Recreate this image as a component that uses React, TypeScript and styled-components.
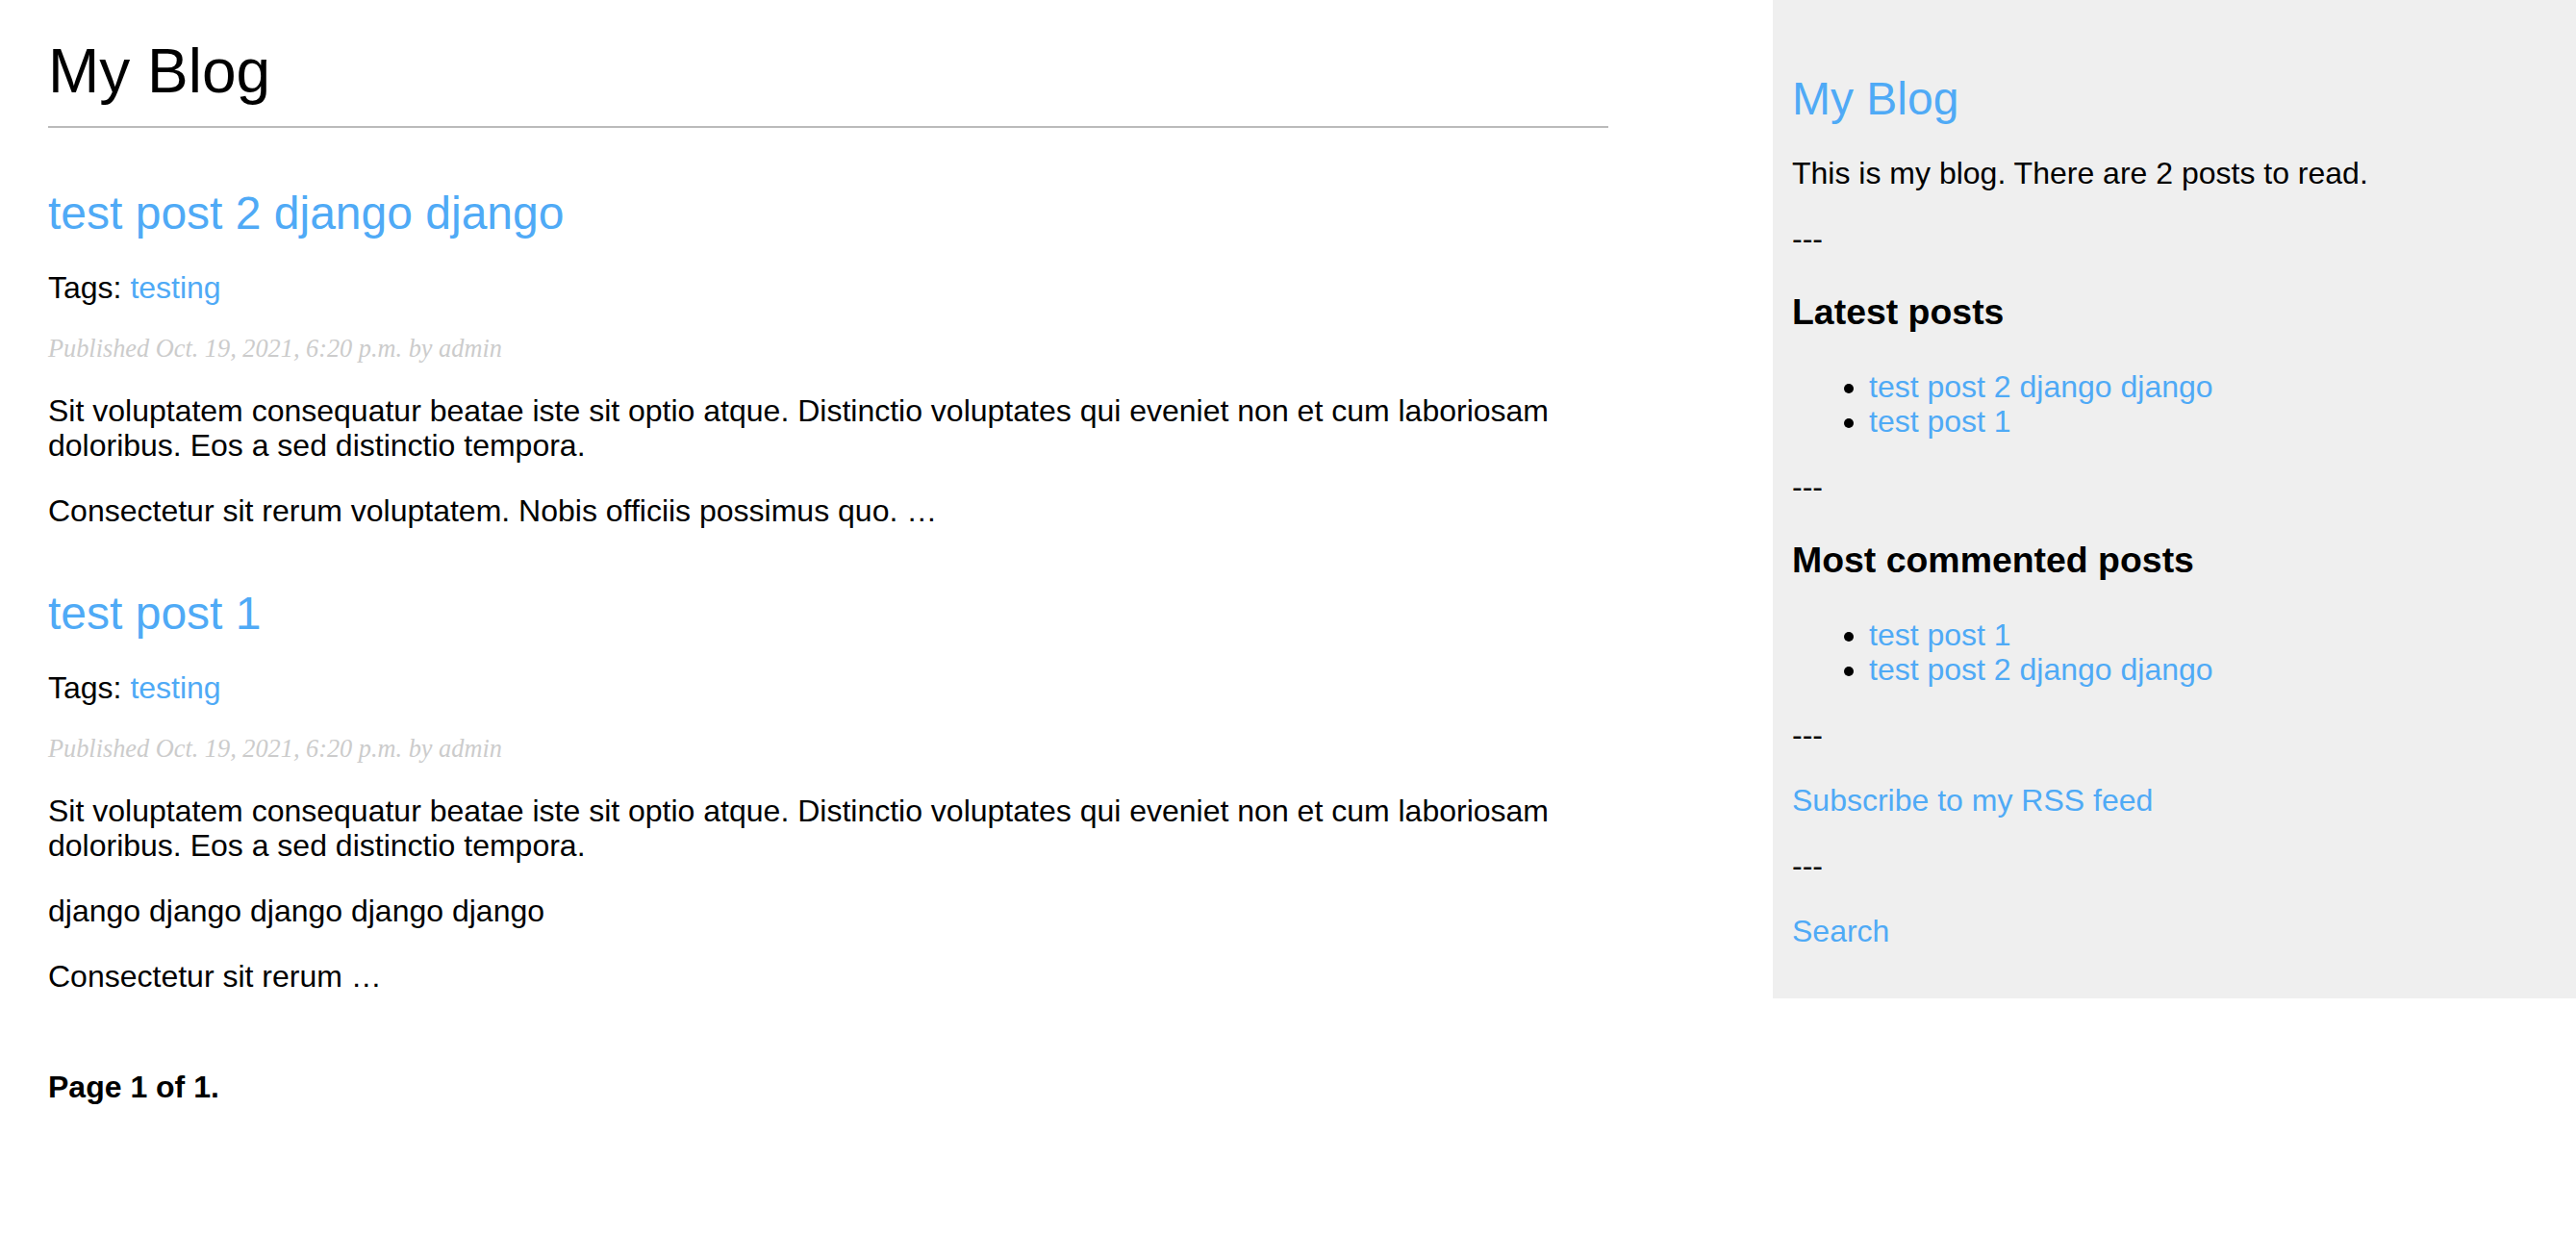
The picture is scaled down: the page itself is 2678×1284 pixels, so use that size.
import React from 'react';
import styled, { createGlobalStyle } from 'styled-components';

const LINK = '#4faaf6';

const GlobalStyle = createGlobalStyle`
  html, body {
    margin: 0;
    padding: 0;
    background: #ffffff;
  }
  body {
    font-family: "Liberation Sans", Helvetica, Arial, sans-serif;
    font-size: 32px;
    line-height: 36px;
    color: #000000;
  }
`;

const Page = styled.div`
  display: flex;
  align-items: flex-start;
  justify-content: space-between;
`;

const Content = styled.main`
  box-sizing: border-box;
  width: 1672px;
  padding-left: 50px;
`;

const Sidebar = styled.aside`
  box-sizing: border-box;
  width: 835px;
  padding: 20px;
  background: #efefef;
`;

const Link = styled.a`
  color: ${LINK};
  text-decoration: none;
`;

const BlogTitle = styled.h1`
  font-size: 64px;
  line-height: 73px;
  font-weight: normal;
  margin: 38px 0 43px;
  padding: 0 0 20px;
  border-bottom: 2px solid #bbbbbb;
`;

const PostTitle = styled.h2`
  font-size: 48px;
  line-height: 55px;
  font-weight: normal;
  margin: 61px 0 0;
`;

const Text = styled.p`
  font-size: 32px;
  line-height: 36px;
  margin: 32px 0;
`;

const PostDate = styled.p`
  font-family: "Liberation Serif", Georgia, serif;
  font-style: italic;
  font-size: 26.3px;
  line-height: 28px;
  color: #cccccc;
  margin: 32px 0;
`;

const Pagination = styled.div`
  margin-top: 79px;
  font-weight: bold;
  font-size: 32px;
  line-height: 36px;
`;

const SideTitle = styled.h2`
  font-size: 48px;
  line-height: 55px;
  font-weight: normal;
  margin: 55px 0 0;
`;

const SideHeading = styled.h3`
  font-size: 37.44px;
  line-height: 43px;
  font-weight: bold;
  margin: 37.44px 0;
`;

const PostList = styled.ul`
  margin: 32px 0;
  padding-left: 80px;
  list-style: disc;
`;

type Post = {
  title: string;
  tags: string[];
  date: string;
  author: string;
  body: string[];
};

const posts: Post[] = [
  {
    title: 'test post 2 django django',
    tags: ['testing'],
    date: 'Oct. 19, 2021, 6:20 p.m.',
    author: 'admin',
    body: [
      'Sit voluptatem consequatur beatae iste sit optio atque. Distinctio voluptates qui eveniet non et cum laboriosam doloribus. Eos a sed distinctio tempora.',
      'Consectetur sit rerum voluptatem. Nobis officiis possimus quo. …',
    ],
  },
  {
    title: 'test post 1',
    tags: ['testing'],
    date: 'Oct. 19, 2021, 6:20 p.m.',
    author: 'admin',
    body: [
      'Sit voluptatem consequatur beatae iste sit optio atque. Distinctio voluptates qui eveniet non et cum laboriosam doloribus. Eos a sed distinctio tempora.',
      'django django django django django',
      'Consectetur sit rerum …',
    ],
  },
];

const latest = ['test post 2 django django', 'test post 1'];
const mostCommented = ['test post 1', 'test post 2 django django'];

const PostEntry = ({ post }: { post: Post }) => (
  <article>
    <PostTitle>
      <Link href="#">{post.title}</Link>
    </PostTitle>
    <Text>
      Tags:{' '}
      {post.tags.map((tag, i) => (
        <React.Fragment key={tag}>
          {i > 0 && ', '}
          <Link href="#">{tag}</Link>
        </React.Fragment>
      ))}
    </Text>
    <PostDate>
      Published {post.date} by {post.author}
    </PostDate>
    {post.body.map((para, i) => (
      <Text key={i}>{para}</Text>
    ))}
  </article>
);

export default function App() {
  return (
    <>
      <GlobalStyle />
      <Page>
        <Content>
          <BlogTitle>My Blog</BlogTitle>
          {posts.map((post) => (
            <PostEntry key={post.title} post={post} />
          ))}
          <Pagination>
            <span>Page 1 of 1.</span>
          </Pagination>
        </Content>
        <Sidebar>
          <SideTitle>
            <Link href="#">My Blog</Link>
          </SideTitle>
          <Text>This is my blog. There are 2 posts to read.</Text>
          <Text>---</Text>
          <SideHeading>Latest posts</SideHeading>
          <PostList>
            {latest.map((t) => (
              <li key={t}>
                <Link href="#">{t}</Link>
              </li>
            ))}
          </PostList>
          <Text>---</Text>
          <SideHeading>Most commented posts</SideHeading>
          <PostList>
            {mostCommented.map((t) => (
              <li key={t}>
                <Link href="#">{t}</Link>
              </li>
            ))}
          </PostList>
          <Text>---</Text>
          <Text>
            <Link href="#">Subscribe to my RSS feed</Link>
          </Text>
          <Text>---</Text>
          <Text>
            <Link href="#">Search</Link>
          </Text>
        </Sidebar>
      </Page>
    </>
  );
}
